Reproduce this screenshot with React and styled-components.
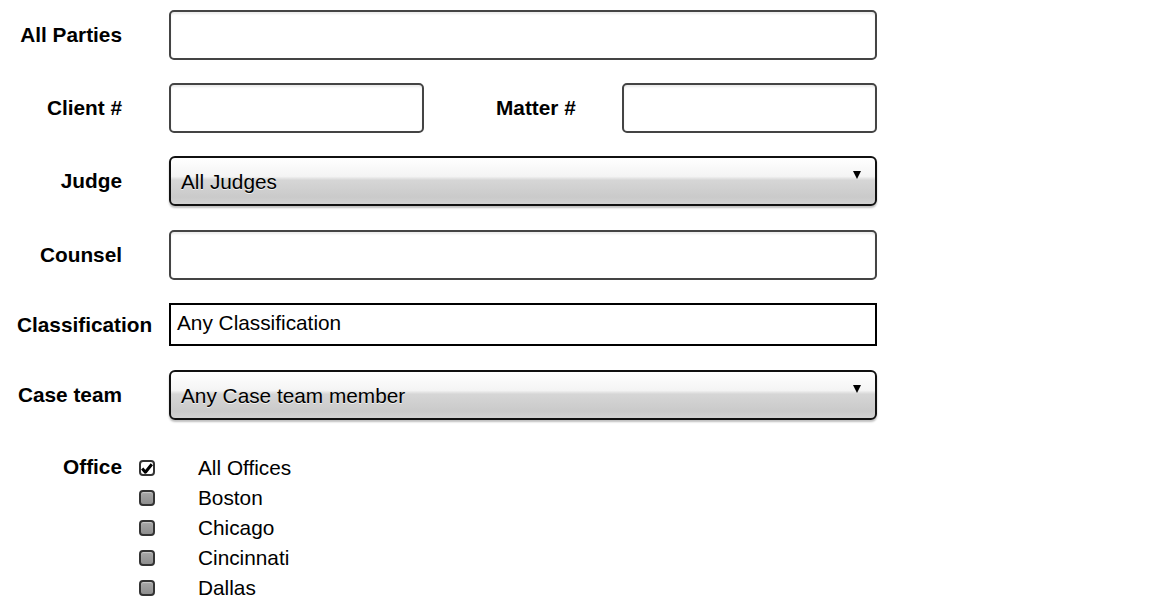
import React from "react"
import styled, { createGlobalStyle } from "styled-components"

const GlobalStyle = createGlobalStyle`
  html, body {
    margin: 0;
    padding: 0;
    background: #fff;
    font-family: "Liberation Sans", Arial, sans-serif;
    color: #000;
  }
`

const Form = styled.form`
  display: flex;
  flex-direction: column;
  padding: 10px 0 0 17px;
  width: 860px;
`

const Row = styled.div`
  display: grid;
  grid-template-columns: 105px 708px;
  column-gap: 47px;
  align-items: center;
  margin-bottom: ${p => p.$mb ?? 23}px;
`

const Label = styled.label`
  font-weight: bold;
  font-size: 20.8px;
  text-align: ${p => p.$left ? "left" : "right"};
  white-space: nowrap;
  margin-top: ${p => p.$mt ?? 0}px;
`

const TextBox = styled.div`
  box-sizing: border-box;
  height: 50px;
  width: ${p => p.$w ? p.$w + "px" : "100%"};
  border: 2px solid #444;
  border-radius: 5px;
  background: #fff;
  box-shadow: inset 0 2px 2px rgba(0, 0, 0, 0.08);
`

const SplitRow = styled.div`
  display: flex;
  align-items: center;
`

const InlineLabel = styled(Label)`
  width: 152px;
  margin-right: 46px;
`

const Select = styled.div`
  box-sizing: border-box;
  height: 50px;
  border: 2px solid #111;
  border-radius: 6px;
  background: linear-gradient(#ffffff 0%, #f4f4f4 40%, #d6d6d6 48%, #cacaca 85%, #d2d2d2 100%);
  box-shadow: 0 2px 2px rgba(0, 0, 0, 0.25);
  display: flex;
  align-items: center;
  justify-content: space-between;
  padding: 0 14px 0 10px;
  font-size: 20.8px;
`

const SelectText = styled.span`
  margin-top: 2px;
  text-shadow: 0 1px 0 rgba(255, 255, 255, 0.7);
`

const Arrow = styled.span`
  align-self: flex-start;
  margin-top: 13px;
  width: 0;
  height: 0;
  border-left: 4.5px solid transparent;
  border-right: 4.5px solid transparent;
  border-top: 8px solid #000;
`

const Plain = styled.div`
  box-sizing: border-box;
  height: 43px;
  border: 2px solid #000;
  background: #fff;
  display: flex;
  align-items: center;
  padding: 0 6px 3px;
  font-size: 20.8px;
`

const OfficeRow = styled.div`
  display: grid;
  grid-template-columns: 105px auto;
  align-items: start;
`

const OfficeList = styled.div`
  display: flex;
  flex-direction: column;
`

const Option = styled.div`
  display: flex;
  align-items: center;
  height: 30px;
  font-size: 20.8px;
`

const Box = styled.span`
  box-sizing: border-box;
  width: 16px;
  height: 16px;
  border: 2px solid #333;
  border-radius: 4px;
  background: ${p => p.$checked ? "#fff" : "linear-gradient(#a8a8a8, #8e8e8e)"};
  box-shadow: inset 0 1px 1px rgba(255, 255, 255, 0.4);
  margin-left: 17px;
  margin-right: 43px;
  display: flex;
  align-items: center;
  justify-content: center;
`

const Check = () => (
  <svg width="12" height="11" viewBox="0 0 12 11">
    <path d="M1.2 5.6 L4.4 9.2 L10.8 1.2" fill="none" stroke="#000" strokeWidth="3" strokeLinejoin="round" />
  </svg>
)

const offices = [
  { name: "All Offices", checked: true },
  { name: "Boston" },
  { name: "Chicago" },
  { name: "Cincinnati" },
  { name: "Dallas" },
]

export default function App() {
  return (
    <>
      <GlobalStyle />
      <Form>
        <Row>
          <Label>All Parties</Label>
          <TextBox />
        </Row>
        <Row>
          <Label>Client #</Label>
          <SplitRow>
            <TextBox $w={256} />
            <InlineLabel>Matter #</InlineLabel>
            <TextBox $w={256} />
          </SplitRow>
        </Row>
        <Row $mb={24}>
          <Label>Judge</Label>
          <Select>
            <SelectText>All Judges</SelectText>
            <Arrow />
          </Select>
        </Row>
        <Row>
          <Label>Counsel</Label>
          <TextBox />
        </Row>
        <Row $mb={24}>
          <Label $left>Classification</Label>
          <Plain>Any Classification</Plain>
        </Row>
        <Row $mb={33}>
          <Label>Case team</Label>
          <Select>
            <SelectText>Any Case team member</SelectText>
            <Arrow />
          </Select>
        </Row>
        <OfficeRow>
          <Label $mt={2}>Office</Label>
          <OfficeList>
            {offices.map(o => (
              <Option key={o.name}>
                <Box $checked={o.checked}>{o.checked && <Check />}</Box>
                {o.name}
              </Option>
            ))}
          </OfficeList>
        </OfficeRow>
      </Form>
    </>
  )
}
